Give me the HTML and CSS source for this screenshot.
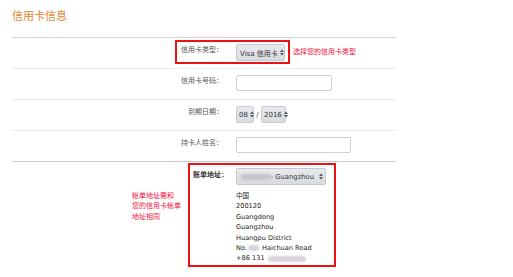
FILE: index.html
```html
<!DOCTYPE html>
<html lang="zh-CN">
<head>
<meta charset="utf-8">
<title>信用卡信息</title>
<link rel="stylesheet" href="styles.css">
</head>
<body>
<div class="page">
  <h1 class="title">信用卡信息</h1>
  <div class="form">
    <div class="row row-boxed">
      <div class="hl-box box-type">
        <span class="label label-in">信用卡类型：</span>
        <span class="select sel-type">Visa 信用卡<svg class="arr" width="4" height="7" viewBox="0 0 4 7"><path d="M0 3 L2 0.5 L4 3Z M0 4 L2 6.5 L4 4Z" fill="#555"/></svg></span>
      </div>
      <span class="hint">选择您的信用卡类型</span>
    </div>
    <div class="row">
      <span class="label">信用卡号码：</span>
      <span class="field"><span class="input in-num"></span></span>
    </div>
    <div class="row">
      <span class="label">到期日期：</span>
      <span class="field date">
        <span class="select sel-month">08<svg class="arr" width="4" height="7" viewBox="0 0 4 7"><path d="M0 3 L2 0.5 L4 3Z M0 4 L2 6.5 L4 4Z" fill="#555"/></svg></span>
        <span class="slash">/</span>
        <span class="select sel-year">2016<svg class="arr" width="4" height="7" viewBox="0 0 4 7"><path d="M0 3 L2 0.5 L4 3Z M0 4 L2 6.5 L4 4Z" fill="#555"/></svg></span>
      </span>
    </div>
    <div class="row last">
      <span class="label">持卡人姓名：</span>
      <span class="field"><span class="input in-name"></span></span>
    </div>
    <div class="row-addr">
      <div class="note">帐单地址需和<br>您的信用卡帐单<br>地址相同</div>
      <div class="hl-box box-addr">
        <span class="label-addr">账单地址：</span>
        <div class="addr-col">
          <span class="select sel-addr"><span class="blur blur-sel"></span><span class="sel-text">- Guangzhou</span><svg class="arr" width="4" height="7" viewBox="0 0 4 7"><path d="M0 3 L2 0.5 L4 3Z M0 4 L2 6.5 L4 4Z" fill="#555"/></svg></span>
          <div class="addr">
            <div>中国</div>
            <div>200120</div>
            <div>Guangdong</div>
            <div>Guangzhou</div>
            <div>Huangpu District</div>
            <div>No.<span class="blur blur-no"></span>Haichuan Road</div>
            <div>+86 131<span class="blur blur-tel"></span></div>
          </div>
        </div>
      </div>
    </div>
  </div>
</div>
</body>
</html>
```
FILE: styles.css
```css
body {
  margin: 0;
  background: #fff;
  font-family: "DejaVu Sans", "Noto Sans CJK SC", sans-serif;
  color: #444;
}

.page {
  width: 384px;
  padding: 8px 0 0 12px;
}

.title {
  margin: 0;
  font-size: 11px;
  line-height: 14px;
  font-weight: normal;
  color: #e5832c;
  font-family: "Noto Sans CJK SC", sans-serif;
}

.form {
  margin-top: 15px;
  border-top: 1px solid #d4d4d4;
}

.row {
  display: flex;
  align-items: flex-start;
  height: 30px;
  border-bottom: 1px solid #ececec;
  font-size: 7px;
}

.row.last {
  border-bottom-color: #cacaca;
}

.label {
  width: 211px;
  text-align: right;
  line-height: 12px;
  margin-top: 5px;
  color: #555;
  font-family: "Noto Sans CJK SC", sans-serif;
}

.field {
  margin-left: 13px;
  margin-top: 6px;
  display: flex;
  align-items: center;
}

/* highlighted (red) boxes */
.hl-box {
  border: 2px solid #ee1111;
}

.row-boxed {
  padding-left: 163px;
}

.box-type {
  display: flex;
  align-items: flex-start;
  margin-top: 2px;
  padding: 2px 3px 1px 0;
}

.label-in {
  width: 46px;
  margin-top: -1px;
}

.sel-type {
  margin-left: 13px;
  width: 49px;
  padding: 0 1px 0 2px;
}

.hint {
  margin-left: 3px;
  margin-top: 7px;
  line-height: 12px;
  color: #f0103c;
  font-family: "Noto Sans CJK SC", sans-serif;
}

/* selects */
.select {
  display: inline-flex;
  align-items: center;
  justify-content: space-between;
  box-sizing: border-box;
  height: 17px;
  padding: 0 2px 0 3px;
  border: 1px solid #c6c9ce;
  border-radius: 2px;
  background: linear-gradient(#e8eaee, #d8dbe0);
  color: #333;
  font-size: 7px;
  white-space: nowrap;
}

.arr {
  flex: none;
  margin-left: 2px;
}

.sel-month {
  width: 18px;
  padding: 0 1px 0 2px;
}

.slash {
  width: 7px;
  text-align: center;
  color: #444;
}

.sel-year {
  width: 25px;
  padding: 0 1px 0 2px;
}

/* inputs */
.input {
  display: block;
  box-sizing: border-box;
  height: 16px;
  border: 1px solid #cfcfcf;
  border-radius: 2px;
  background: #fff;
}

.in-num {
  width: 96px;
}

.in-name {
  width: 115px;
}

/* address row */
.row-addr {
  display: flex;
  align-items: flex-start;
  padding-left: 120px;
  font-size: 7px;
}

.note {
  width: 56px;
  margin-top: 28px;
  line-height: 10.4px;
  color: #f0103c;
  font-family: "Noto Sans CJK SC", sans-serif;
}

.box-addr {
  display: flex;
  align-items: flex-start;
  margin-top: 1px;
  padding: 3px 8px 1px 0;
}

.label-addr {
  width: 43px;
  padding-left: 3px;
  line-height: 12px;
  font-weight: bold;
  color: #333;
  font-family: "Noto Sans CJK SC", sans-serif;
}

.addr-col {
  display: flex;
  flex-direction: column;
}

.sel-addr {
  width: 90px;
  padding: 0 2px 0 4px;
}

.sel-text {
  margin-left: auto;
  margin-right: 3px;
  font-size: 6.8px;
}

.addr {
  margin-top: 6px;
  line-height: 10.4px;
  font-size: 6.6px;
  color: #222;
}

.blur {
  display: inline-block;
  height: 6px;
  border-radius: 3px;
  background: #d4d4d6;
  filter: blur(1.2px);
  vertical-align: middle;
}

.blur-sel {
  width: 34px;
  background: #c3c5c9;
}

.blur-no {
  width: 11px;
  margin: 0 3px 0 1px;
}

.blur-tel {
  width: 38px;
  margin-left: 3px;
}
```
